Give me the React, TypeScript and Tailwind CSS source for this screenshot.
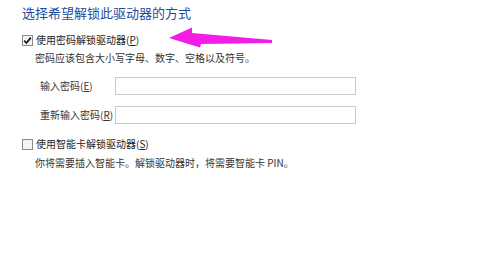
import React from "react";

const FONT = '"Noto Sans CJK SC", "Noto Sans", sans-serif';

function Check({ checked }: { checked: boolean }) {
  return (
    <span className="flex h-[11px] w-[11px] items-center justify-center border border-[#8a8a8a] bg-[#f4f4f4]">
      {checked && (
        <svg width="9" height="9" viewBox="0 0 9 9">
          <path d="M1.2 4.6 L3.5 7 L7.8 1.6" fill="none" stroke="#1a1a1a" strokeWidth="1.8" />
        </svg>
      )}
    </span>
  );
}

function Field({ label }: { label: React.ReactNode }) {
  return (
    <div className="flex h-[18px] items-center">
      <span className="w-[75px] text-[10px] leading-[12px] text-[#333]">{label}</span>
      <span className="h-[18px] w-[241px] border border-[#c9c9c9] bg-white" />
    </div>
  );
}

export default function App() {
  return (
    <div className="relative h-[253px] w-[486px] overflow-hidden bg-white" style={{ fontFamily: FONT }}>
      <div className="flex flex-col pl-[22px] pt-[4px]">
        <div className="h-[17px] text-[13px] leading-[17px] text-[#1f4b9c]">选择希望解锁此驱动器的方式</div>

        <div className="mt-[13px] flex h-[12px] items-center gap-[3px]">
          <Check checked />
          <span className="text-[10px] leading-[12px] text-[#222]">
            使用密码解锁驱动器(<span className="underline">P</span>)
          </span>
        </div>
        <div className="ml-[13px] mt-[6px] h-[12px] text-[10px] leading-[12px] text-[#333]">
          密码应该包含大小写字母、数字、空格以及符号。
        </div>

        <div className="ml-[18px] mt-[13px] flex flex-col gap-[11px]">
          <Field label={<>输入密码(<span className="underline">E</span>)</>} />
          <Field label={<>重新输入密码(<span className="underline">R</span>)</>} />
        </div>

        <div className="mt-[14px] flex h-[12px] items-center gap-[3px]">
          <Check checked={false} />
          <span className="text-[10px] leading-[12px] text-[#222]">
            使用智能卡解锁驱动器(<span className="underline">S</span>)
          </span>
        </div>
        <div className="ml-[13px] mt-[7px] h-[12px] text-[10px] leading-[12px] text-[#333]">
          你将需要插入智能卡。解锁驱动器时，将需要智能卡 PIN。
        </div>
      </div>

      <svg className="absolute left-0 top-0" width="486" height="253" viewBox="0 0 486 253">
        <path
          d="M169 38 L192 27.5 L192 33 L272 40 L272 43 L201 44 L200 47.5 Z"
          fill="#f21ee6"
        />
      </svg>
    </div>
  );
}
